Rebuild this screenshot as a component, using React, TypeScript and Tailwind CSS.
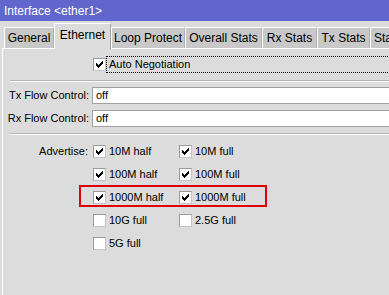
import React from "react";

function Check({ checked }: { checked: boolean }) {
  const px: [number, number][] = [
    [6, 0],
    [5, 1], [6, 1],
    [0, 2], [4, 2], [5, 2], [6, 2],
    [0, 3], [1, 3], [3, 3], [4, 3], [5, 3],
    [0, 4], [1, 4], [2, 4], [3, 4], [4, 4],
    [1, 5], [2, 5], [3, 5],
    [2, 6],
  ];
  return (
    <div className="w-[13px] h-[13px] shrink-0 bg-white border border-[#9a9a9a] border-b-[#c4c4c4] border-r-[#c4c4c4] relative">
      {checked && (
        <svg width="7" height="7" viewBox="0 0 7 7" className="absolute left-[2px] top-[2px]" shapeRendering="crispEdges">
          {px.map(([x, y], i) => (
            <rect key={i} x={x} y={y} width="1" height="1" fill="#000" />
          ))}
        </svg>
      )}
    </div>
  );
}

function Item({ label, checked }: { label: string; checked: boolean }) {
  return (
    <div className="flex items-center h-[17px] w-[86px]">
      <Check checked={checked} />
      <span className="ml-[3px] whitespace-nowrap">{label}</span>
    </div>
  );
}

const tabs: { name: string; w: string; active?: boolean }[] = [
  { name: "General", w: "w-[50px]" },
  { name: "Ethernet", w: "w-[57px]", active: true },
  { name: "Loop Protect", w: "w-[74px]" },
  { name: "Overall Stats", w: "w-[77px]" },
  { name: "Rx Stats", w: "w-[55px]" },
  { name: "Tx Stats", w: "w-[53px]" },
  { name: "Stats", w: "w-[60px]" },
];

const rows: [string, boolean, string | null, boolean][] = [
  ["10M half", true, "10M full", true],
  ["100M half", true, "100M full", true],
  ["1000M half", true, "1000M full", true],
  ["10G full", false, "2.5G full", false],
  ["5G full", false, null, false],
];

export default function App() {
  return (
    <div
      className="w-[389px] h-[295px] overflow-hidden bg-[#dcdcdc] text-black text-[11px]"
      style={{ fontFamily: '"Liberation Sans", Arial, sans-serif' }}
    >
      <div className="h-[21px] bg-[#6066cc] text-white text-[12px] leading-[22px] pl-[4px] whitespace-nowrap">
        Interface &lt;ether1&gt;
      </div>
      <div className="h-[27px] flex items-end pl-[4px] whitespace-nowrap">
        {tabs.map((t) =>
          t.active ? (
            <div
              key={t.name}
              className={`${t.w} shrink-0 h-[26px] -mb-px relative z-10 bg-[#dcdcdc] border-t border-l border-white border-r border-r-[#a0a0a0] flex items-center justify-center pb-[3px] text-[12px]`}
            >
              {t.name}
            </div>
          ) : (
            <div
              key={t.name}
              className={`${t.w} shrink-0 h-[21px] bg-[#c8c8c8] border-t border-l border-white border-r border-r-[#b0b0b0] flex items-center text-[12px] ${t.name === "Stats" ? "justify-start pl-[3px]" : "justify-center"}`}
            >
              {t.name}
            </div>
          )
        )}
      </div>
      <div className="ml-[2px] border-l border-t border-white h-[260px]">
        <div className="mt-[7px] h-[17px] flex items-center">
          <div className="w-[90px] shrink-0" />
          <Check checked={true} />
          <div className="w-[300px] shrink-0 h-[17px] border border-dotted border-black pl-[2px] flex items-center whitespace-nowrap">
            Auto Negotiation
          </div>
        </div>
        <div className="mt-[7px] ml-[7px] border-t border-t-[#b4b4b4] border-b border-b-white" />
        <div className="mt-[5px] flex items-center h-[17px]">
          <div className="w-[86px] text-right shrink-0 whitespace-nowrap">Tx Flow Control:</div>
          <div className="ml-[3px] w-[300px] shrink-0 h-[17px] bg-white border border-[#a0a0a0] border-r-0 pl-[3px] flex items-center">off</div>
        </div>
        <div className="mt-[6px] flex items-center h-[17px]">
          <div className="w-[86px] text-right shrink-0 whitespace-nowrap">Rx Flow Control:</div>
          <div className="ml-[3px] w-[300px] shrink-0 h-[17px] bg-white border border-[#a0a0a0] border-r-0 pl-[3px] flex items-center">off</div>
        </div>
        <div className="mt-[6px] ml-[7px] border-t border-t-[#b4b4b4] border-b border-b-white" />
        <div className="mt-[8px] relative flex flex-col gap-[6px]">
          {rows.map(([a, ac, b, bc], i) => (
            <div key={a} className="flex items-center h-[17px]">
              <div className="w-[85px] text-right shrink-0 whitespace-nowrap">{i === 0 ? "Advertise:" : ""}</div>
              <div className="ml-[5px]">
                <Item label={a} checked={ac} />
              </div>
              {b && <Item label={b} checked={bc} />}
            </div>
          ))}
          <div className="absolute top-[42px] left-[76px] w-[188px] h-[22px] border-2 border-[#e00000]" />
        </div>
      </div>
    </div>
  );
}
